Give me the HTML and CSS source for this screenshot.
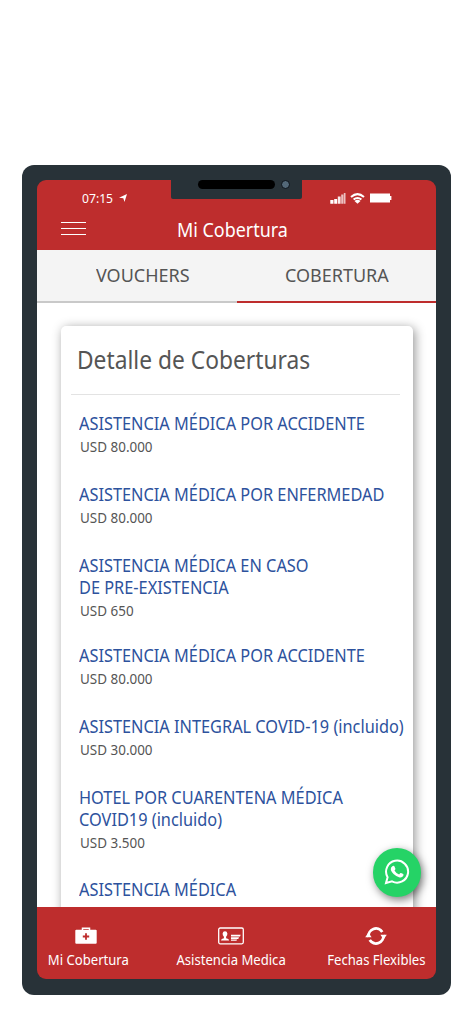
FILE: index.html
```html
<!DOCTYPE html>
<html lang="es">
<head>
<meta charset="utf-8">
<title>Mi Cobertura</title>
<link rel="stylesheet" href="styles.css">
</head>
<body>
<div class="phone">
  <div class="screen">
    <div class="notch"><span class="speaker"></span><span class="camera"></span></div>
    <header class="header">
      <div class="status">
        <span class="time"><span class="fit fit-time">07:15</span></span>
        <svg class="arrow" width="8" height="8" viewBox="0 0 8 8"><path d="M0 3.800 8 0 5.500 8 4.300 4.300Z" fill="#fff"/></svg>
        <svg class="signals" width="62" height="12" viewBox="0 0 62 12">
          <g fill="#fff"><path d="M.3 8h3.200v3.800H.3zM4.200 7h3v4.800h-3z"/><path opacity=".9" d="M7.800 4.500h2.800v7.300H7.800z"/><path opacity=".7" d="M11.200 2.500h2.200v9.300h-2.200zM13.800 1h1.700v10.800h-1.700z"/></g>
          <g fill="none" stroke="#fff" stroke-width="2"><path d="M21 5q6.500-5.800 13 0M23.600 7.600q3.900-3.300 7.800 0"/></g>
          <path d="M24.500 9q3-2.300 6 0L27.500 11.800Z" fill="#fff"/>
          <path d="M40 1.600h20v9H40zM60 4h1.400v4H60z" fill="#fff"/>
        </svg>
      </div>
      <div class="titlebar">
        <svg class="menu" width="25" height="16" viewBox="0 0 25 16"><path d="M0 1.500h25M0 7.500h25M0 13.500h25" stroke="#fff" stroke-width="1.200"/></svg>
        <h1><span class="fit fit-head">Mi Cobertura</span></h1>
      </div>
    </header>
    <nav class="tabs">
      <a class="tab"><span class="fit fit-vouchers">VOUCHERS</span></a>
      <a class="tab active"><span class="fit fit-cobertura">COBERTURA</span></a>
    </nav>
    <main class="content">
      <section class="card">
        <h2><span class="fit fit-detail">Detalle de Coberturas</span></h2>
        <div class="item"><h3>ASISTENCIA MÉDICA POR ACCIDENTE</h3><p>USD 80.000</p></div>
        <div class="item"><h3>ASISTENCIA MÉDICA POR ENFERMEDAD</h3><p>USD 80.000</p></div>
        <div class="item tight"><h3>ASISTENCIA MÉDICA EN CASO<br>DE PRE-EXISTENCIA</h3><p>USD 650</p></div>
        <div class="item"><h3>ASISTENCIA MÉDICA POR ACCIDENTE</h3><p>USD 80.000</p></div>
        <div class="item"><h3>ASISTENCIA INTEGRAL COVID-19 (incluido)</h3><p>USD 30.000</p></div>
        <div class="item last-full"><h3>HOTEL POR CUARENTENA MÉDICA<br>COVID19 (incluido)</h3><p>USD 3.500</p></div>
        <div class="item"><h3>ASISTENCIA MÉDICA</h3></div>
      </section>
    </main>
    <div class="whatsapp">
      <svg width="26" height="26" viewBox="0 0 26 26">
        <path d="M2 24 3.600 18.200A11 11 0 1 1 8 22.400Z" fill="none" stroke="#fff" stroke-width="2"/>
        <path d="M8.300 7.300q1.500-1.200 2.200.2l.9 2.200q.2.600-.9 1.800 1.500 2.900 4.600 4l1.300-1.500q.4-.4 2.800 1 .6.400.1 1.800-1.200 2.100-4.300 1.400-6-1.800-8.200-7.200-.4-2.400 1.500-3.700Z" fill="#fff"/>
      </svg>
    </div>
    <footer class="bottom">
      <a class="nav first">
        <svg width="22" height="18" viewBox="0 0 22 18"><path d="M7.500 4V1.300h7V4" fill="none" stroke="#fff" stroke-width="1.500"/><rect x=".3" y="2.800" width="21.400" height="14" rx="1" fill="#fff"/><path d="M11 6.300v6.400M7.800 9.500h6.400" stroke="#be2d2d" stroke-width="1.800"/></svg>
        <span class="fit fit-nav">Mi Cobertura</span>
      </a>
      <a class="nav second">
        <svg width="26" height="18" viewBox="0 0 26 18"><rect x=".7" y="1" width="24.600" height="15.800" rx="1.500" fill="none" stroke="#fff" stroke-width="1.300"/><path d="M3 13.500q0-1.800 2.900-2.300V9.700Q4.500 8.500 4.600 6.500 4.900 4.300 7 4.300T9.400 6.500q.1 2-1.300 3.200v1.500q3 .5 3 2.300ZM13 7.800h9.700L22 9.500h-9zM13 10.200h8L20.300 11.900H13zM13 12.500h6l-.5 1.300H13z" fill="#fff"/></svg>
        <span class="fit fit-nav">Asistencia Medica</span>
      </a>
      <a class="nav third">
        <svg width="22" height="18" viewBox="0 0 22 18"><g fill="none" stroke="#fff" stroke-width="2.800"><path d="M3.600 10A7.500 7.500 0 0 1 17.300 4.900M18.400 8A7.500 7.500 0 0 1 4.700 13.100"/></g><path d="M.2 10.200 3.400 5.600 6.600 10.200ZM21.800 7.800 18.600 12.400 15.400 7.800Z" fill="#fff"/></svg>
        <span class="fit fit-nav">Fechas Flexibles</span>
      </a>
    </footer>
  </div>
</div>
</body>
</html>
```
FILE: styles.css
```css
* { box-sizing: border-box; }
body { margin: 0; padding: 165px 0 0 22px; height: 1024px; background: #fff; font-family: "Noto Sans", "Open Sans", sans-serif; color: #555; overflow: hidden; }
h1, h2, h3, p { margin: 0; font-weight: 400; }
.phone { width: 429px; height: 829.500px; padding: 15px; background: #283238; border-radius: 12px; }
.screen { position: relative; width: 399px; height: 799px; display: flex; flex-direction: column; background: #283238; border-radius: 9px; overflow: hidden; }
.fit { display: inline-block; white-space: nowrap; transform-origin: left; }
.fit-time { transform: scaleX(.95); }
.fit-head { transform: scaleX(.943); }
.fit-vouchers { transform: scaleX(.963); }
.fit-cobertura { transform: scaleX(.962); }
.fit-detail { transform: scaleX(.893); }
.fit-nav { transform: scaleX(.957); transform-origin: center; }
.notch { position: absolute; left: 134px; top: 0; width: 131px; height: 19px; background: #283238; border-radius: 0 0 2px 2px; display: flex; padding-left: 27px; gap: 6px; }
.speaker { width: 77px; height: 9px; background: #000; border-radius: 5px; }
.camera { width: 9px; height: 9px; background: #536878; border: 1px solid #0c1218; border-radius: 50%; }
.header { height: 70px; flex: none; background: #be2d2d; color: #fff; }
.status { display: flex; height: 32px; padding: 9px 0 0 45px; }
.time { width: 36px; font-size: 12.800px; line-height: 18px; }
.arrow { margin: 5px 0 0 1px; }
.signals { margin: 3px 0 0 203px; }
.titlebar { display: flex; height: 38px; padding-left: 24px; }
.menu { margin-top: 9px; }
h1 { margin-left: 91px; font-size: 19px; line-height: 36px; }
.tabs { display: flex; height: 53px; flex: none; background: #f4f4f4; }
.tab { width: 199.500px; padding-left: 59px; border-bottom: 2px solid #c9c9c9; font-size: 18.700px; line-height: 50px; }
.tab.active { padding-left: 48px; border-color: #be2d2d; }
.content { height: 604px; flex: none; padding: 23px 23px 0 24.400px; overflow: hidden; background: #fff; }
.card { height: 640px; background: #fff; border-radius: 5px; padding: 0 0 0 18px; box-shadow: 2px 2px 11px rgba(0,0,0,.42); }
h2 { height: 69px; margin: 0 13px 17px -8px; padding-left: 6px; border-bottom: 1px solid #e3e3e3; font-size: 25.500px; line-height: 67px; }
.item { margin-bottom: 24px; white-space: nowrap; }
.item.tight { margin-bottom: 21px; }
.item.last-full { margin-bottom: 23px; }
h3 { width: max-content; margin-left: -.5px; font-size: 17.500px; line-height: 22px; color: #2d529d; transform: scaleX(.933); transform-origin: left; }
.item p { width: max-content; margin-left: 1px; font-size: 14px; line-height: 25px; transform: scaleX(.96); transform-origin: left; }
.whatsapp { position: absolute; left: 335.500px; top: 668px; width: 48.500px; height: 48.500px; border-radius: 50%; background: #25d366; display: flex; align-items: center; justify-content: center; box-shadow: 2px 3px 9px rgba(0,0,0,.5); }
.bottom { display: flex; height: 72px; flex: none; background: #be2d2d; color: #fff; }
.nav { display: flex; flex-direction: column; align-items: center; padding-top: 20px; font-size: 13.700px; line-height: 19px; gap: 5px; }
.first { width: 103px; }
.second { width: 182px; }
.third { width: 108px; }
.first svg { margin-right: 5px; }
```
